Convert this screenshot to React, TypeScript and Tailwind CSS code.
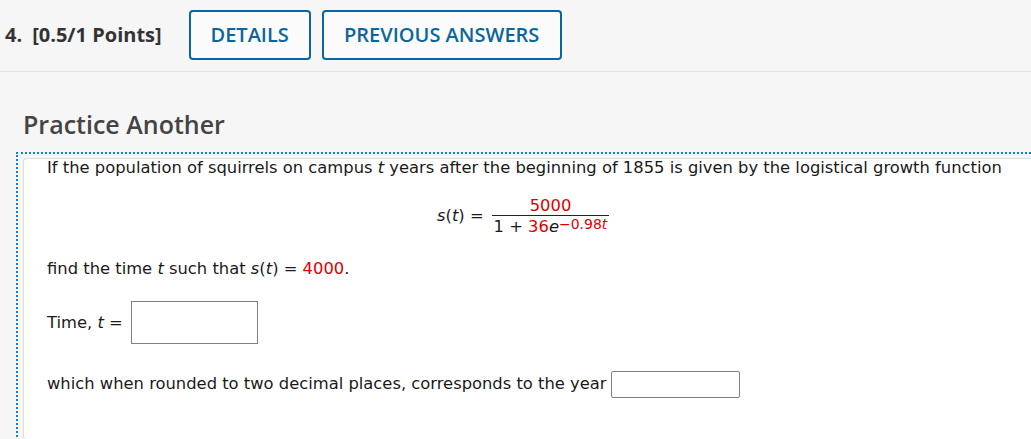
import React from "react";

export default function App() {
  const v = { fontFamily: '"DejaVu Sans", Verdana, sans-serif' };
  return (
    <div className="w-[1031px] h-[439px] overflow-hidden bg-[#f6f6f6]" style={{ fontFamily: '"Open Sans", sans-serif' }}>
      <div className="h-[72px] flex items-center border-b border-[#e2e2e2] pl-[5px] pb-[2px]">
        <div className="text-[20px] font-bold text-[#333] flex gap-[10px]">
          <span>4.</span>
          <span>[0.5/1 Points]</span>
        </div>
        <button className="ml-[27px] h-[50px] w-[122px] border-2 border-[#0b659f] rounded-[4px] bg-[#fbfbfb] text-[#0b659f] text-[20px] font-semibold">
          DETAILS
        </button>
        <button className="ml-[11px] h-[50px] w-[240px] border-2 border-[#0b659f] rounded-[4px] bg-[#fbfbfb] text-[#0b659f] text-[20px] font-semibold">
          PREVIOUS ANSWERS
        </button>
      </div>
      <div className="pt-[36px] pl-[23px] text-[25px] font-semibold text-[#444] leading-[32px]">Practice Another</div>
      <div className="mt-[12px] ml-[16px] border-t-2 border-l-2 border-dotted border-[#0f7ddf] pl-[5px] pt-[4px] h-[300px]">
        <div className="bg-white border-t border-l border-[#dcdcdc] rounded-tl-[4px] rounded-bl-[4px] h-[282px] pl-[23px] text-[16.35px] text-[#1a1a1a]" style={v}>
          <div className="leading-[20px] mt-[-1px]">
            If the population of squirrels on campus <i>t</i> years after the beginning of 1855 is given by the logistical growth function
          </div>
          <div className="flex items-center mt-[17px] ml-[390px]">
            <span className="mr-[8px]"><i>s</i>(<i>t</i>) =</span>
            <span className="inline-flex flex-col items-center">
              <span className="text-[#e00000] leading-[20px] px-[2px] relative top-[1px]">5000</span>
              <span className="border-t border-[#222] leading-[20px] px-[2px] pt-[1px]">
                1 + <span className="text-[#e00000]">36</span><i>e</i>
                <sup className="text-[#e00000] text-[14px] relative top-[-3px]">&minus;0.98<i>t</i></sup>
              </span>
            </span>
          </div>
          <div className="mt-[22px] leading-[20px]">
            find the time <i>t</i> such that <i>s</i>(<i>t</i>) = <span className="text-[#e00000]">4000</span>.
          </div>
          <div className="mt-[22px] flex items-center">
            <span className="relative top-[1px]">Time, <i>t</i> =</span>
            <span className="ml-[8px] w-[127px] h-[43px] border border-[#808080] bg-white inline-block"></span>
          </div>
          <div className="mt-[27px] flex items-center">
            <span>which when rounded to two decimal places, corresponds to the year</span>
            <span className="ml-[4px] w-[129px] h-[27px] border border-[#808080] rounded-[2px] bg-white inline-block"></span>
          </div>
        </div>
      </div>
    </div>
  );
}
